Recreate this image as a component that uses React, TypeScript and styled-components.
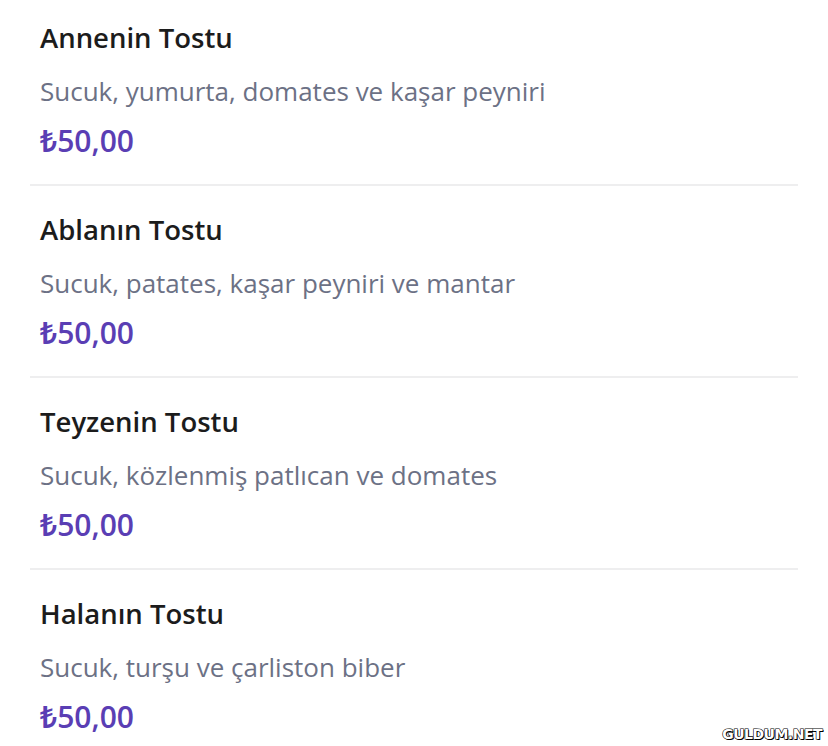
import React from "react";
import styled, { createGlobalStyle } from "styled-components";

const items = [
  { name: "Annenin Tostu", desc: "Sucuk, yumurta, domates ve kaşar peyniri", price: "₺50,00" },
  { name: "Ablanın Tostu", desc: "Sucuk, patates, kaşar peyniri ve mantar", price: "₺50,00" },
  { name: "Teyzenin Tostu", desc: "Sucuk, közlenmiş patlıcan ve domates", price: "₺50,00" },
  { name: "Halanın Tostu", desc: "Sucuk, turşu ve çarliston biber", price: "₺50,00" },
];

const GlobalStyle = createGlobalStyle`
  body {
    margin: 0;
    background: #fff;
    font-family: "Open Sans", "Noto Sans", sans-serif;
  }
`;

const App = () => {
  return (
    <StylePage>
      <GlobalStyle />
      <StyleList>
        {items.map((item, i) => (
          <StyleItem key={item.name} last={i === items.length - 1}>
            <StyleTitle>{item.name}</StyleTitle>
            <StyleDesc>{item.desc}</StyleDesc>
            <StylePrice>{item.price}</StylePrice>
          </StyleItem>
        ))}
      </StyleList>
      <StyleMark>GULDUM.NET</StyleMark>
    </StylePage>
  );
};

const StylePage = styled.div`
  position: relative;
  width: 828px;
  height: 746px;
  overflow: hidden;
  background: #fff;
`;

const StyleList = styled.div`
  margin-top: -6px;
  margin-left: 30px;
  width: 768px;
  display: flex;
  flex-direction: column;
`;

const StyleItem = styled.div<{ last?: boolean }>`
  height: 192px;
  box-sizing: border-box;
  padding: 24px 10px 0;
  border-bottom: ${(p) => (p.last ? "none" : "2px solid #eeeeef")};
  display: flex;
  flex-direction: column;
`;

const StyleTitle = styled.div`
  font-size: 27.5px;
  font-weight: 600;
  color: #1c1c1c;
  line-height: 40px;
`;

const StyleDesc = styled.div`
  margin-top: 15px;
  font-size: 26px;
  color: #6c7185;
  line-height: 36px;
`;

const StylePrice = styled.div`
  margin-top: 12px;
  font-size: 30px;
  font-weight: 600;
  color: #5a3eb4;
  line-height: 40px;
`;

const StyleMark = styled.div`
  position: absolute;
  right: 6px;
  bottom: 4px;
  font-family: "DejaVu Sans", sans-serif;
  font-weight: 700;
  font-size: 14px;
  letter-spacing: -0.5px;
  color: #fff;
  -webkit-text-stroke: 1.2px #000;
  paint-order: stroke fill;
  text-shadow: 1px 1px 0 #000;
`;

export default App;
